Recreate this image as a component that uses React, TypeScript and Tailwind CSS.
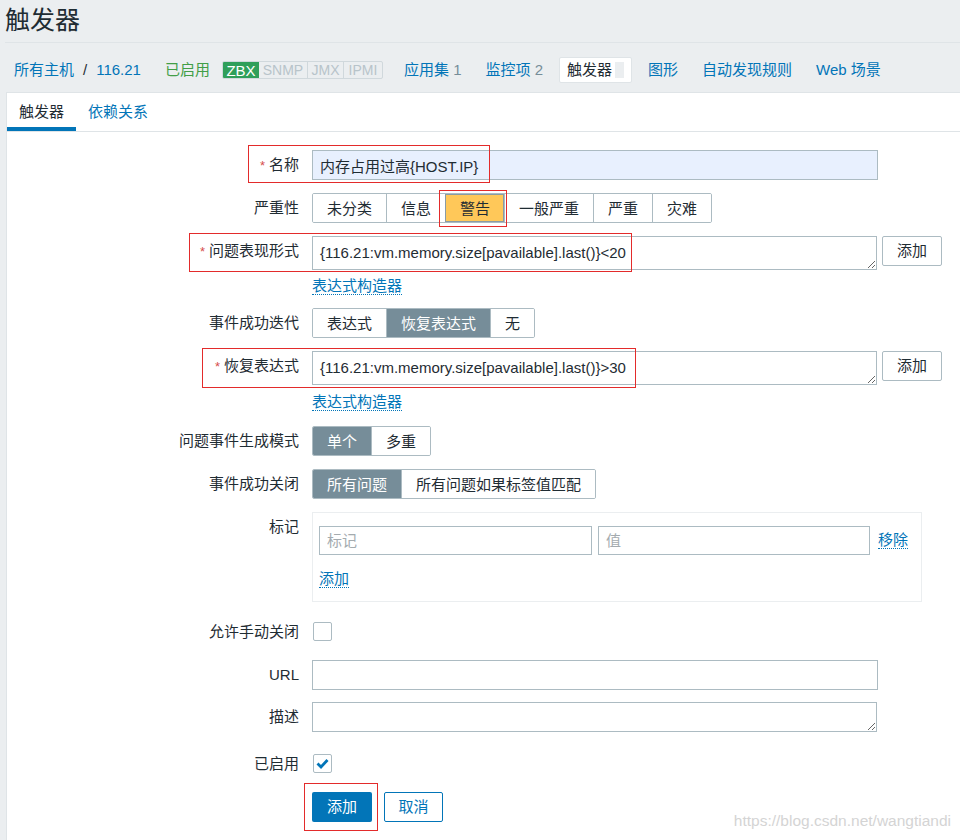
import type { ReactNode } from 'react'

const FONT = "font-['Liberation_Sans','Noto_Sans_CJK_SC',sans-serif]"

interface RowProps {
  label: string
  required?: boolean
  className?: string
  children: ReactNode
}

function Row({ label, required, className = '', children }: RowProps) {
  return (
    <div className={`relative flex items-start ${className}`}>
      <div className="w-[292px] shrink-0 text-right leading-[30px] text-[#1f2c33]">
        {required && <span className="mr-[4px] text-[13px] text-[#d64e4e]">*</span>}
        {label}
      </div>
      <div className="ml-[13px] min-w-0 flex-1">{children}</div>
    </div>
  )
}

function RedBox({ className }: { className: string }) {
  return <div className={`pointer-events-none absolute border border-[#e32b2b] ${className}`} />
}

interface SegProps {
  items: string[]
  active: number
  activeClass?: string
}

function Segmented({ items, active, activeClass = 'bg-[#768d99] text-white' }: SegProps) {
  return (
    <div className="flex h-[30px] w-fit overflow-hidden rounded-[2px] border border-[#acbbc2]">
      {items.map((it, i) => (
        <div
          key={it}
          className={`flex items-center px-[14px] leading-none ${
            i > 0 ? 'border-l border-[#acbbc2]' : ''
          } ${i === active ? activeClass : 'bg-white text-[#1f2c33]'}`}
        >
          {it}
        </div>
      ))}
    </div>
  )
}

function Link({ children }: { children: ReactNode }) {
  return (
    <span className="border-b border-dotted border-[#0275b8] leading-[18px] text-[#0275b8]">{children}</span>
  )
}

function Checkbox({ checked }: { checked?: boolean }) {
  return (
    <div className="flex h-[19px] w-[19px] items-center justify-center rounded-[2px] border border-[#acbbc2] bg-white">
      {checked && (
        <svg width="13" height="11" viewBox="0 0 13 11" fill="none">
          <polyline points="1.5,5.5 5,9 11.5,2" stroke="#0275b8" strokeWidth="2.8" />
        </svg>
      )}
    </div>
  )
}

function ExprArea({ value }: { value: string }) {
  return (
    <div className="flex items-start">
      <textarea
        readOnly
        defaultValue={value}
        rows={1}
        className="block h-[34px] w-[565px] rounded-none border border-[#acbbc2] bg-white px-[7px] py-[6px] text-[15px] leading-[20px] text-[#1f2c33] outline-none"
      />
      <button className="ml-[5px] h-[30px] w-[60px] rounded-[2px] border border-[#acbbc2] bg-white text-[15px] text-[#1f2c33]">
        添加
      </button>
    </div>
  )
}

export default function App() {
  return (
    <div className={`relative flex min-h-[840px] flex-col bg-[#ebeef0] text-[15px] ${FONT}`}>
      {/* header */}
      <div className="px-[5px] pt-[4px]">
        <h1 className="text-[25px] leading-[32px] text-[#1f2c33]">触发器</h1>
      </div>
      <div className="ml-[5px] mt-[6px] h-px bg-[#dfe4e7]" />

      {/* host navigation */}
      <div className="mt-[14px] flex h-[26px] items-center gap-[8px] pl-[6px] text-[#0275b8]">
        <div className="px-[8px]">
          所有主机<span className="mx-[9px] text-[#1f2c33]">/</span>116.21
        </div>
        <div className="px-[8px] text-[#429e47]">已启用</div>
        <div className="-ml-[4px] mr-[5px] flex h-[18px] overflow-hidden rounded-[2px] border border-[#d0d8dc] text-[14px] leading-none">
          <span className="flex w-[36px] items-center justify-center bg-[#2f9f5a] text-[15px] text-white">ZBX</span>
          <span className="flex w-[49px] items-center justify-center border-r border-[#d0d8dc] text-[#b8c4ca]">SNMP</span>
          <span className="flex w-[36px] items-center justify-center border-r border-[#d0d8dc] text-[#b8c4ca]">JMX</span>
          <span className="flex w-[38px] items-center justify-center text-[#b8c4ca]">IPMI</span>
        </div>
        <div className="px-[8px]">
          应用集 <span className="text-[#768d99]">1</span>
        </div>
        <div className="px-[8px]">
          监控项 <span className="text-[#768d99]">2</span>
        </div>
        <div className="flex h-[26px] items-center gap-[3px] rounded-[2px] border border-[#dfe4e7] bg-white px-[7px] text-[#1f2c33]">
          触发器
          <span className="h-[16px] w-[9px] bg-[#ebeef0]" />
        </div>
        <div className="px-[8px]">图形</div>
        <div className="px-[8px]">自动发现规则</div>
        <div className="px-[8px]">Web 场景</div>
      </div>

      {/* panel */}
      <div className="ml-[6px] mt-[9px] flex-1 border-l border-t border-[#dfe4e7] bg-white pb-[30px]">
        <div className="flex border-b border-[#dfe4e7]">
          <div className="border-b-[4px] border-[#0275b8] px-[12px] pb-[5px] pt-[9px] leading-[20px] text-[#1f2c33]">
            触发器
          </div>
          <div className="border-b-[4px] border-transparent px-[12px] pb-[5px] pt-[9px] leading-[20px] text-[#0275b8]">
            依赖关系
          </div>
        </div>

        <Row label="名称" required className="mt-[18px]">
          <input
            readOnly
            defaultValue="内存占用过高{HOST.IP}"
            className="block h-[30px] w-[566px] border border-[#acbbc2] bg-[#e8f0fe] px-[7px] text-[#1f2c33] outline-none"
          />
          <RedBox className="left-[241px] top-[-5px] h-[38px] w-[242px]" />
        </Row>

        <Row label="严重性" className="mt-[12px]">
          <Segmented
            items={['未分类', '信息', '警告', '一般严重', '严重', '灾难']}
            active={2}
            activeClass="bg-[#ffc859] text-[#1f2c33] outline outline-1 -outline-offset-1 outline-[#8a9ba4]"
          />
          <RedBox className="left-[432px] top-[-3px] h-[37px] w-[68px]" />
        </Row>

        <Row label="问题表现形式" required className="mt-[13px]">
          <ExprArea value="{116.21:vm.memory.size[pavailable].last()}<20" />
          <RedBox className="left-[182px] top-[-3px] h-[39px] w-[443px]" />
        </Row>
        <div className="ml-[305px] mt-[6px] h-[20px] leading-[20px]">
          <Link>表达式构造器</Link>
        </div>

        <Row label="事件成功迭代" className="mt-[12px]">
          <Segmented items={['表达式', '恢复表达式', '无']} active={1} />
        </Row>

        <Row label="恢复表达式" required className="mt-[13px]">
          <ExprArea value="{116.21:vm.memory.size[pavailable].last()}>30" />
          <RedBox className="left-[195px] top-[-3px] h-[40px] w-[434px]" />
        </Row>
        <div className="ml-[305px] mt-[7px] h-[20px] leading-[20px]">
          <Link>表达式构造器</Link>
        </div>

        <Row label="问题事件生成模式" className="mt-[14px]">
          <Segmented items={['单个', '多重']} active={0} />
        </Row>

        <Row label="事件成功关闭" className="mt-[13px]">
          <Segmented items={['所有问题', '所有问题如果标签值匹配']} active={0} />
        </Row>

        <Row label="标记" className="mt-[13px]">
          <div className="w-[610px] border border-[#ebeef0] px-[6px] pb-[12px] pt-[13px]">
            <div className="flex items-center">
              <input
                readOnly
                placeholder="标记"
                className="block h-[29px] w-[273px] border border-[#acbbc2] px-[7px] outline-none placeholder:text-[#a4abaf]"
              />
              <input
                readOnly
                placeholder="值"
                className="ml-[6px] block h-[29px] w-[272px] border border-[#acbbc2] px-[7px] outline-none placeholder:text-[#a4abaf]"
              />
              <span className="ml-[8px]">
                <Link>移除</Link>
              </span>
            </div>
            <div className="mt-[14px] h-[20px] leading-[20px]">
              <Link>添加</Link>
            </div>
          </div>
        </Row>

        <div className="mt-[20px] flex items-center">
          <div className="w-[292px] text-right leading-[19px] text-[#1f2c33]">允许手动关闭</div>
          <div className="ml-[14px]">
            <Checkbox />
          </div>
        </div>

        <Row label="URL" className="mt-[19px]">
          <input readOnly className="block h-[30px] w-[566px] border border-[#acbbc2] px-[7px] outline-none" />
        </Row>

        <Row label="描述" className="mt-[12px]">
          <textarea readOnly rows={1} className="block h-[30px] w-[565px] border border-[#acbbc2] px-[7px] outline-none" />
        </Row>

        <div className="mt-[22px] flex items-center">
          <div className="w-[292px] text-right leading-[19px] text-[#1f2c33]">已启用</div>
          <div className="ml-[14px]">
            <Checkbox checked />
          </div>
        </div>

        <div className="relative ml-[305px] mt-[19px] flex gap-[12px]">
          <button className="h-[30px] w-[60px] rounded-[2px] bg-[#0275b8] text-white">添加</button>
          <button className="h-[30px] w-[59px] rounded-[2px] border border-[#0275b8] bg-white text-[#0275b8]">
            取消
          </button>
          <RedBox className="left-[-8px] top-[-9px] h-[48px] w-[74px]" />
        </div>
      </div>

      <div className="pointer-events-none absolute right-[9px] top-[811px] text-[15.5px] leading-[20px] text-[#d4d4d4]">
        https://blog.csdn.net/wangtiandi
      </div>
    </div>
  )
}
